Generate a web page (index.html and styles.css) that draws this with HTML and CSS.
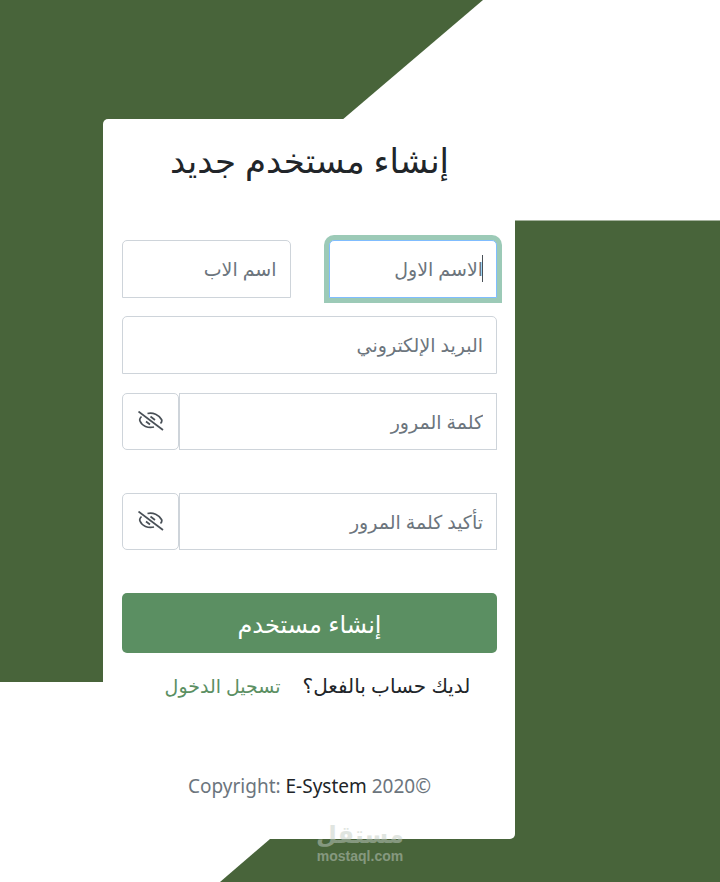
FILE: index.html
```html
<!DOCTYPE html>
<html lang="ar" dir="rtl">

<head>
    <meta charset="UTF-8">
    <meta name="viewport" content="width=device-width, initial-scale=1.0">
    <title>إنشاء مستخدم جديد</title>
    <link rel="stylesheet" href="styles.css">
</head>

<body>
    <svg class="shapes" viewBox="0 0 720 882" preserveAspectRatio="none" aria-hidden="true">
        <path d="M483 0H720V220.500H224Z" fill="#fff"/>
        <path d="M0 682H453L220 882H0Z" fill="#fff"/>
    </svg>
    <main class="card">
        <h1 class="title">إنشاء مستخدم جديد</h1>
        <form class="form">
            <div class="row">
                <div class="field focused">
                    <input class="input" type="text" placeholder="الاسم الاول" aria-label="الاسم الاول">
                    <span class="caret"></span>
                </div>
                <div class="field">
                    <input class="input" type="text" placeholder="اسم الاب" aria-label="اسم الاب">
                </div>
            </div>
            <input class="input" type="email" placeholder="البريد الإلكتروني" aria-label="البريد الإلكتروني">
            <div class="group">
                <input class="input" type="password" placeholder="كلمة المرور" aria-label="كلمة المرور">
                <button class="eye" type="button" aria-label="إظهار كلمة المرور">
                    <svg viewBox="0 0 26 20" width="26" height="20">
                        <path d="M9.500 2.500C15 1 21 4 23.500 8.500Q24.500 10.500 22.500 12.500M3.500 5.500Q1 8 2 10C4 15 10 17.500 16 16M12.500 5.500L17 9M8 10.500L12 13.500"/>
                        <path d="M.500 .500L25 19"/>
                    </svg>
                </button>
            </div>
            <div class="group">
                <input class="input" type="password" placeholder="تأكيد كلمة المرور" aria-label="تأكيد كلمة المرور">
                <button class="eye" type="button" aria-label="إظهار كلمة المرور">
                    <svg viewBox="0 0 26 20" width="26" height="20">
                        <path d="M9.500 2.500C15 1 21 4 23.500 8.500Q24.500 10.500 22.500 12.500M3.500 5.500Q1 8 2 10C4 15 10 17.500 16 16M12.500 5.500L17 9M8 10.500L12 13.500"/>
                        <path d="M.500 .500L25 19"/>
                    </svg>
                </button>
            </div>
            <button class="submit" type="submit">إنشاء مستخدم</button>
        </form>
        <p class="login"><span>لديك حساب بالفعل؟</span> <a href="#">تسجيل الدخول</a></p>
        <p class="copy" dir="ltr">Copyright: <a href="#">E-System</a> 2020©</p>
    </main>
    <div class="mark">
        <span class="mark-name">مستقل</span>
        <span class="mark-url">mostaql.com</span>
    </div>
</body>

</html>
```

FILE: styles.css
```css
* {
    box-sizing: border-box;
    margin: 0;
    padding: 0;
}

body {
    position: relative;
    min-height: 100vh;
    padding: 119px 205px 43px 103px;
    background-color: #48643a;
    font-family: "Noto Sans", "DejaVu Sans", sans-serif;
    font-size: 19px;
    line-height: 30px;
    color: #212529;
}

.shapes {
    position: absolute;
    top: 0;
    left: 0;
    width: 100%;
    height: 100%;
}

.card {
    position: relative;
    padding: 17px 18px 38px 19px;
    background-color: #fff;
    border-radius: 5px;
}

.title {
    margin-bottom: 56px;
    font-size: 34px;
    font-weight: normal;
    line-height: 48px;
    text-align: center;
}

.row {
    display: flex;
    gap: 38px;
    margin-bottom: 18px;
}

.field {
    position: relative;
    flex: 1;
}

.input {
    display: block;
    width: 100%;
    height: 58px;
    padding: 0 13px;
    border: 1px solid #ced4da;
    border-radius: 5px 5px 0 0;
    background-color: #fff;
    font-family: inherit;
    font-size: 19px;
    color: #495057;
}

.input::placeholder {
    color: #6c757d;
    opacity: 1;
}

.focused .input {
    border-color: #80bdff;
    box-shadow: 0 0 0 5px #9ccab7;
}

.caret {
    position: absolute;
    top: 15px;
    right: 14px;
    width: 1px;
    height: 27px;
    background-color: #495057;
}

.group {
    display: flex;
    margin: 19px 0 43px;
}

.group .input {
    flex: 1;
    height: 57px;
    border-radius: 0;
}

.eye {
    display: flex;
    align-items: center;
    justify-content: center;
    width: 57px;
    height: 57px;
    padding-bottom: 2px;
    border: 1px solid #ced4da;
    border-radius: 5px;
    background-color: #fff;
}

.eye svg {
    fill: none;
    stroke: #495057;
    stroke-width: 1.7;
}

.submit {
    display: block;
    width: 100%;
    height: 60px;
    border: 0;
    border-radius: 5px;
    background-color: #5b8f62;
    font-family: inherit;
    font-size: 24px;
    color: #fff;
}

.login {
    display: flex;
    justify-content: center;
    gap: 22px;
    margin-top: 18px;
    padding-left: 16px;
}

.login span {
    font-size: 20px;
}

.login a {
    color: #5b8f62;
    text-decoration: none;
}

.copy {
    margin-top: 70px;
    text-align: center;
    color: #6c757d;
}

.copy a {
    color: #212529;
    text-decoration: none;
}

.mark {
    position: absolute;
    bottom: 18px;
    left: 50%;
    width: 100px;
    margin-left: -50px;
    text-align: center;
    font-weight: bold;
    color: #c3cdc3;
    opacity: 0.5;
}

.mark-name {
    display: block;
    font-size: 24px;
    line-height: 28px;
}

.mark-url {
    display: block;
    font-family: "Liberation Sans", sans-serif;
    font-size: 14px;
    line-height: 16px;
}
```
